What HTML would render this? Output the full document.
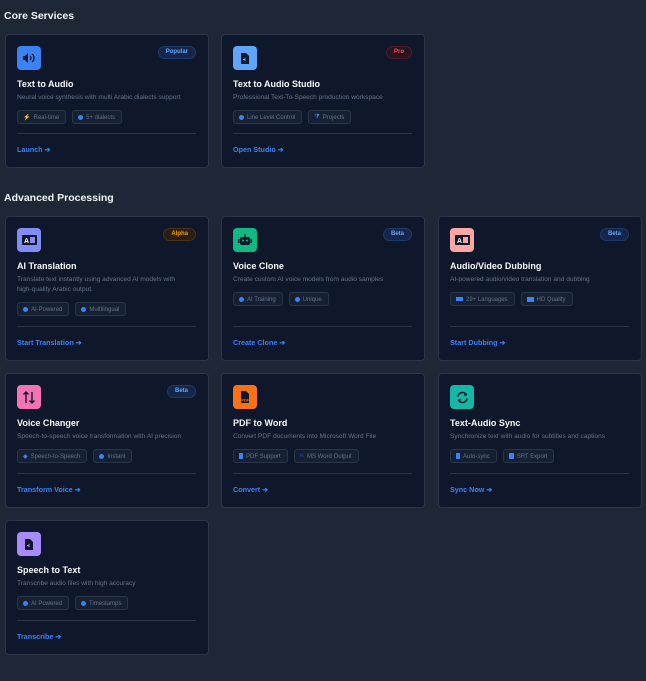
<!DOCTYPE html>
<html><head><meta charset="utf-8">
<style>
*{box-sizing:border-box;margin:0;padding:0}
html,body{width:646px;height:681px;background:#1e2736;overflow:hidden;font-family:"Liberation Sans",sans-serif}
h2{position:absolute;left:4px;color:#f1f5f9;font-size:10.5px;font-weight:bold}
.card{position:absolute;background:#0f172a;border:1px solid #2b3548;border-radius:4px;padding:11px 12px 0 11px;display:flex;flex-direction:column}
.ic{width:24px;height:24px;border-radius:4px;display:flex;align-items:center;justify-content:center}
.badge{position:absolute;right:12px;top:11px;height:13px;padding:0 7px;border-radius:7px;font-size:6px;font-weight:bold;line-height:11px;border:1px solid}
.b-blue{background:#15264a;border-color:#1e3a6a;color:#60a5fa}
.b-red{background:#2a1420;border-color:#4a1d26;color:#ef4444}
.b-or{background:#2a1e14;border-color:#4a3014;color:#f59e0b}
.t{color:#f8fafc;font-size:9px;font-weight:bold;margin-top:8px;line-height:12px}
.d{color:#64748b;font-size:6.6px;margin-top:3px;line-height:10px}
.tags{display:flex;gap:6px;margin-top:7px}
.tag{height:14px;border:1px solid #2b3548;background:#162033;border-radius:3px;font-size:6px;color:#64748b;display:flex;align-items:center;padding:0 6px 0 5px;gap:3px}
.tag b{font-weight:normal;line-height:1;display:block;padding-top:1px}
.dot{width:5px;height:5px;border-radius:50%;background:#3b82f6}
.sp{flex:1}
.hr{height:1px;background:#2b3548}
.lk{color:#3b82f6;font-size:7.2px;font-weight:bold;height:33px;line-height:31px}
</style></head><body>
<h2 style="top:10px">Core Services</h2>
<h2 style="top:192px">Advanced Processing</h2>

<div class="card" style="left:5px;top:34px;width:204px;height:134px">
<div class="ic" style="background:#3b82f6"><svg width="14" height="12" viewBox="0 0 14 12"><path d="M1 4h2l3-3v10L3 8H1z" fill="#0f172a"/><path d="M8 4a2.5 2.5 0 010 4M10 2a5 5 0 010 8" stroke="#0f172a" stroke-width="1.3" fill="none"/></svg></div>
<div class="badge b-blue">Popular</div>
<div class="t">Text to Audio</div>
<div class="d">Neural voice synthesis with multi Arabic dialects support</div>
<div class="tags"><div class="tag"><span style="color:#3b82f6">⚡</span><b>Real-time</b></div><div class="tag"><span class="dot"></span><b>5+ dialects</b></div></div>
<div class="sp"></div><div class="hr"></div><div class="lk">Launch ➔</div></div>

<div class="card" style="left:221px;top:34px;width:204px;height:134px">
<div class="ic" style="background:#60a5fa"><svg width="10" height="13" viewBox="0 0 10 13"><path d="M1 1h5l3 3v8H1z" fill="#0f172a"/><path d="M3 7h1l1.5-1.5v4L4 8H3z" fill="#60a5fa"/></svg></div>
<div class="badge b-red">Pro</div>
<div class="t">Text to Audio Studio</div>
<div class="d">Professional Text-To-Speech production workspace</div>
<div class="tags"><div class="tag"><span class="dot"></span><b>Line Level Control</b></div><div class="tag"><span style="color:#3b82f6;font-size:6px">⧩</span><b>Projects</b></div></div>
<div class="sp"></div><div class="hr"></div><div class="lk">Open Studio ➔</div></div>

<div class="card" style="left:5px;top:216px;width:204px;height:145px">
<div class="ic" style="background:#818cf8"><svg width="15" height="10" viewBox="0 0 15 10"><rect width="15" height="10" rx="1" fill="#0f172a"/><text x="2" y="8" font-size="7" fill="#fff" font-family="Liberation Sans" font-weight="bold">A</text><rect x="8" y="2" width="5" height="6" fill="#818cf8"/></svg></div>
<div class="badge b-or">Alpha</div>
<div class="t">AI Translation</div>
<div class="d">Translate text instantly using advanced AI models with<br>high-quality Arabic output.</div>
<div class="tags"><div class="tag"><span class="dot"></span><b>AI-Powered</b></div><div class="tag"><span class="dot"></span><b>Multilingual</b></div></div>
<div class="sp"></div><div class="hr"></div><div class="lk">Start Translation ➔</div></div>

<div class="card" style="left:221px;top:216px;width:204px;height:145px">
<div class="ic" style="background:#10b981"><svg width="14" height="12" viewBox="0 0 14 12"><rect x="2" y="3" width="10" height="8" rx="2" fill="#0f172a"/><rect x="6.3" y="0" width="1.4" height="3" fill="#0f172a"/><rect x="0" y="5" width="1.5" height="4" fill="#0f172a"/><rect x="12.5" y="5" width="1.5" height="4" fill="#0f172a"/><circle cx="5" cy="6.5" r="1" fill="#10b981"/><circle cx="9" cy="6.5" r="1" fill="#10b981"/></svg></div>
<div class="badge b-blue">Beta</div>
<div class="t">Voice Clone</div>
<div class="d">Create custom AI voice models from audio samples</div>
<div class="tags"><div class="tag"><span class="dot"></span><b>AI Training</b></div><div class="tag"><span class="dot"></span><b>Unique</b></div></div>
<div class="sp"></div><div class="hr"></div><div class="lk">Create Clone ➔</div></div>

<div class="card" style="left:438px;top:216px;width:204px;height:145px">
<div class="ic" style="background:#fca5a5"><svg width="15" height="10" viewBox="0 0 15 10"><rect width="15" height="10" rx="1" fill="#0f172a"/><text x="2" y="8" font-size="7" fill="#fff" font-family="Liberation Sans" font-weight="bold">A</text><rect x="8" y="2" width="5" height="6" fill="#fca5a5"/></svg></div>
<div class="badge b-blue">Beta</div>
<div class="t">Audio/Video Dubbing</div>
<div class="d">AI-powered audio/video translation and dubbing</div>
<div class="tags"><div class="tag"><span style="width:7px;height:4px;background:#3b82f6;display:inline-block"></span><b>29+ Languages</b></div><div class="tag"><span style="width:7px;height:5px;background:#3b82f6;display:inline-block"></span><b>HD Quality</b></div></div>
<div class="sp"></div><div class="hr"></div><div class="lk">Start Dubbing ➔</div></div>

<div class="card" style="left:5px;top:373px;width:204px;height:135px">
<div class="ic" style="background:#f472b6"><svg width="14" height="13" viewBox="0 0 14 13"><path d="M4 12V1M1.5 3.5L4 1l2.5 2.5M10 1v11M7.5 9.5L10 12l2.5-2.5" stroke="#0f172a" stroke-width="1.4" fill="none"/></svg></div>
<div class="badge b-blue">Beta</div>
<div class="t">Voice Changer</div>
<div class="d">Speech-to-speech voice transformation with AI precision</div>
<div class="tags"><div class="tag"><span style="color:#3b82f6">◆</span><b>Speech-to-Speech</b></div><div class="tag"><span class="dot"></span><b>Instant</b></div></div>
<div class="sp"></div><div class="hr"></div><div class="lk">Transform Voice ➔</div></div>

<div class="card" style="left:221px;top:373px;width:204px;height:135px">
<div class="ic" style="background:#f97316"><svg width="12" height="14" viewBox="0 0 12 14"><path d="M2 1h5l3 3v9H2z" fill="#0f172a"/><text x="2.3" y="11.5" font-size="4" fill="#f97316" font-family="Liberation Sans" font-weight="bold">PDF</text></svg></div>
<div class="t">PDF to Word</div>
<div class="d">Convert PDF documents into Microsoft Word File</div>
<div class="tags"><div class="tag"><span style="width:4px;height:6px;background:#3b82f6;display:inline-block"></span><b>PDF Support</b></div><div class="tag"><span style="color:#3b82f6">∩</span><b>MS Word Output</b></div></div>
<div class="sp"></div><div class="hr"></div><div class="lk">Convert ➔</div></div>

<div class="card" style="left:438px;top:373px;width:204px;height:135px">
<div class="ic" style="background:#14b8a6"><svg width="13" height="13" viewBox="0 0 13 13"><path d="M2 5.5A4.5 4.5 0 0110.5 4M11 7.5A4.5 4.5 0 012.5 9" stroke="#0f172a" stroke-width="1.6" fill="none"/><path d="M9 1.5l2.3 2.8-3.2.8zM4 11.5L1.7 8.7l3.2-.8z" fill="#0f172a"/></svg></div>
<div class="t">Text-Audio Sync</div>
<div class="d">Synchronize text with audio for subtitles and captions</div>
<div class="tags"><div class="tag"><span style="width:4px;height:6px;background:#3b82f6;display:inline-block"></span><b>Auto-sync</b></div><div class="tag"><span style="width:5px;height:6px;background:#3b82f6;display:inline-block"></span><b>SRT Export</b></div></div>
<div class="sp"></div><div class="hr"></div><div class="lk">Sync Now ➔</div></div>

<div class="card" style="left:5px;top:520px;width:204px;height:135px">
<div class="ic" style="background:#a78bfa"><svg width="10" height="13" viewBox="0 0 10 13"><path d="M1 1h5l3 3v8H1z" fill="#0f172a"/><path d="M3 7h1l1.5-1.5v4L4 8H3z" fill="#a78bfa"/></svg></div>
<div class="t">Speech to Text</div>
<div class="d">Transcribe audio files with high accuracy</div>
<div class="tags"><div class="tag"><span class="dot"></span><b>AI Powered</b></div><div class="tag"><span class="dot"></span><b>Timestamps</b></div></div>
<div class="sp"></div><div class="hr"></div><div class="lk">Transcribe ➔</div></div>
</body></html>
